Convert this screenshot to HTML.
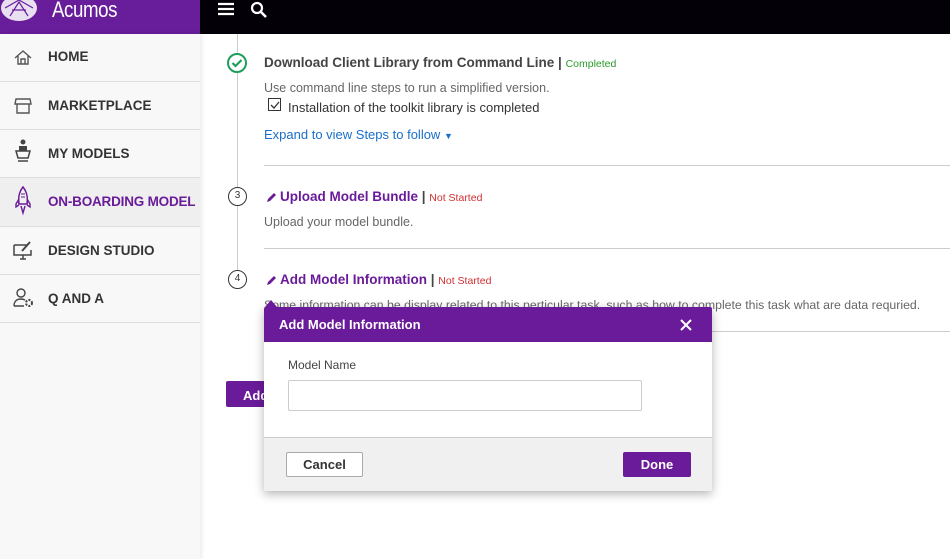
<!DOCTYPE html>
<html><head><meta charset="utf-8"><style>
*{box-sizing:border-box;margin:0;padding:0}
body{width:950px;height:559px;overflow:hidden;font-family:"Liberation Sans",Arial,sans-serif;background:#fff;position:relative}
.abs{position:absolute}
.hdrL{left:0;top:0;width:200px;height:34px;background:#681d9b}
.hdrR{left:200px;top:0;width:750px;height:34px;background:#030008}
.side{left:0;top:34px;width:200px;height:525px;background:#f8f8f8;box-shadow:2px 0 4px rgba(0,0,0,.08)}
.item{position:absolute;left:0;width:200px;height:48px;border-bottom:1px solid #ddd;font-weight:bold;font-size:13.5px;color:#333;white-space:nowrap}
.item span{position:absolute;left:48px;top:16px}
.item svg{position:absolute;left:12px;top:12px}
.t{font-size:13px;color:#444}
.g{color:#666;font-size:12px}
.line{left:237px;top:34px;width:1px;height:255px;background:#ccc}
.circ{width:19px;height:19px;border:1.5px solid #333;border-radius:50%;background:#fff;font-size:10px;text-align:center;line-height:16px;color:#333}
.hr{left:264px;width:686px;height:1px;background:#ccc}
.purple{color:#6a1b9a}
</style></head><body>
<div class="abs hdrL"></div>
<svg class="abs" style="left:0;top:0" width="40" height="24"><ellipse cx="19" cy="8" rx="18" ry="13" fill="#e8dff0"/><path d="M5 8 L19 0 L33 8 M10 16 L19 2 L28 16 M12 10 L26 10" stroke="#681d9b" stroke-width="1.2" fill="none"/></svg>
<div class="abs" style="left:52px;top:-3px;color:#fff;font-size:22px;letter-spacing:-0.5px;transform:scaleX(.85);transform-origin:left">Acumos</div>
<div class="abs hdrR"></div>
<svg class="abs" style="left:217px;top:2px" width="18" height="14"><path d="M1 2h16M1 7h16M1 12h16" stroke="#fff" stroke-width="2.2"/></svg>
<svg class="abs" style="left:250px;top:1px" width="18" height="18"><circle cx="7" cy="7" r="5" stroke="#fff" stroke-width="2.2" fill="none"/><path d="M11 11l5 5" stroke="#fff" stroke-width="2.6"/></svg>
<div class="abs side"></div>
<div class="item" style="top:34px"><svg width="22" height="22"><path d="M3 12L11 5l8 7M6 10v8h10v-8M9 18v-5h4v5" stroke="#555" stroke-width="1.4" fill="none"/></svg><span style="top:15px">HOME</span></div>
<div class="item" style="top:82px"><svg width="22" height="22"><path d="M4 5h14l1 5H3zM5 10v9h12v-9" stroke="#555" stroke-width="1.4" fill="none"/></svg><span>MARKETPLACE</span></div>
<div class="item" style="top:130px"><svg width="22" height="26" style="top:8px"><circle cx="11" cy="4" r="2.5" fill="#444"/><path d="M7 8h8v5H7z" fill="#444"/><path d="M4 13h14l-2 7H6z M6 23h10" stroke="#444" stroke-width="1.5" fill="none"/></svg><span>MY MODELS</span></div>
<div class="item" style="top:178px;background:#efefef;height:49px"><svg width="22" height="30" style="top:8px"><path d="M11 1c4 5 5 10 4 17H7C6 11 7 6 11 1z" stroke="#6a1b9a" stroke-width="1.6" fill="none"/><path d="M7 13l-3 5v3l3-2M15 13l3 5v3l-3-2M9 20l2 7 2-7" stroke="#6a1b9a" stroke-width="1.4" fill="none"/><path d="M9 8h4M9 11h4" stroke="#6a1b9a"/></svg><span class="purple" style="letter-spacing:-0.2px">ON-BOARDING MODEL</span></div>
<div class="item" style="top:227px"><svg width="22" height="22"><path d="M2 6h14M2 6v10h17v-5M8 20h6M11 16v4" stroke="#444" stroke-width="1.5" fill="none"/><path d="M18 3l-8 9" stroke="#444" stroke-width="2"/></svg><span>DESIGN STUDIO</span></div>
<div class="item" style="top:275px"><svg width="24" height="22"><circle cx="9" cy="6" r="4" stroke="#444" stroke-width="1.4" fill="none"/><path d="M2 19c0-5 3-7 7-7 2 0 3 .5 4 1M2 19h10" stroke="#444" stroke-width="1.4" fill="none"/><circle cx="17" cy="16" r="3" stroke="#444" stroke-width="2" fill="none" stroke-dasharray="2 1.3"/></svg><span>Q AND A</span></div>

<div class="abs line"></div>
<svg class="abs" style="left:226px;top:52px" width="22" height="22"><circle cx="11" cy="11" r="9" fill="#fff" stroke="#1e9e5a" stroke-width="2"/><path d="M6.5 11l3 3 6-6" stroke="#1e9e5a" stroke-width="2.2" fill="none"/></svg>
<div class="abs t" style="left:264px;top:55px;font-weight:bold;font-size:13.5px;color:#444">Download Client Library from Command Line | <span style="font-weight:normal;font-size:10.5px;color:#2a9a2a">Completed</span></div>
<div class="abs g" style="left:264px;top:81px;font-size:12.5px">Use command line steps to run a simplified version.</div>
<div class="abs" style="left:268px;top:98px;width:13px;height:13px;border:1px solid #333"></div>
<svg class="abs" style="left:269px;top:99px" width="12" height="12"><path d="M2 6l3 3 5-6" stroke="#333" stroke-width="1.3" fill="none"/></svg>
<div class="abs t" style="left:288px;top:100px;color:#333">Installation of the toolkit library is completed</div>
<div class="abs" style="left:264px;top:127px;font-size:13px;color:#1a6fc9">Expand to view Steps to follow <span style="font-size:9px">&#9660;</span></div>
<div class="abs hr" style="top:165px"></div>
<div class="abs circ" style="left:228px;top:187px">3</div>
<svg class="abs" style="left:266px;top:192px" width="11" height="11"><path d="M1 10l1-3 6-6 2 2-6 6z" fill="#6a1b9a"/></svg>
<div class="abs purple" style="left:280px;top:189px;font-weight:bold;font-size:13.5px">Upload Model Bundle <span style="color:#444">|</span> <span style="font-weight:normal;font-size:10.5px;color:#d03030">Not Started</span></div>
<div class="abs g" style="left:264px;top:215px;font-size:12.5px">Upload your model bundle.</div>
<div class="abs hr" style="top:248px"></div>
<div class="abs circ" style="left:228px;top:270px">4</div>
<svg class="abs" style="left:266px;top:275px" width="11" height="11"><path d="M1 10l1-3 6-6 2 2-6 6z" fill="#6a1b9a"/></svg>
<div class="abs purple" style="left:280px;top:272px;font-weight:bold;font-size:13.5px">Add Model Information <span style="color:#444">|</span> <span style="font-weight:normal;font-size:10.5px;color:#d03030">Not Started</span></div>
<div class="abs g" style="left:264px;top:298px;font-size:12.3px">Some information can be display related to this perticular task, such as how to complete this task what are data requried.</div>
<div class="abs hr" style="top:331px"></div>
<div class="abs" style="left:226px;top:381px;width:50px;height:26px;background:#6a1b9a;color:#fff;font-weight:bold;font-size:13px;padding:7px 0 0 17px;border-radius:2px">Add</div>

<div class="abs" style="left:264px;top:307px;width:448px;height:184px;background:#fff;box-shadow:0 3px 10px rgba(0,0,0,.3);border-radius:2px;overflow:hidden">
<div style="height:35px;background:#6a1b9a;color:#fff;font-weight:bold;font-size:13px;padding:10px 15px">Add Model Information</div>
<svg class="abs" style="left:416px;top:12px" width="12" height="12"><path d="M1 1l10 10M11 1L1 11" stroke="#fff" stroke-width="2"/></svg>
<div class="abs" style="left:24px;top:51px;font-size:12px;color:#444">Model Name</div>
<div class="abs" style="left:24px;top:73px;width:354px;height:31px;border:1px solid #ccc;border-radius:2px"></div>
<div class="abs" style="left:0;top:130px;width:448px;height:54px;background:#f0f0f0;border-top:1px solid #ccc"></div>
<div class="abs" style="left:22px;top:145px;width:77px;height:25px;background:#fff;border:1px solid #aaa;border-radius:2px;font-weight:bold;font-size:13px;color:#333;text-align:center;line-height:23px">Cancel</div>
<div class="abs" style="left:359px;top:145px;width:68px;height:25px;background:#6a1b9a;border-radius:2px;font-weight:bold;font-size:13px;color:#fff;text-align:center;line-height:25px">Done</div>
</div>
<div class="abs" style="left:265px;top:300px;width:0;height:0;border-left:6px solid transparent;border-right:6px solid transparent;border-bottom:7px solid #6a1b9a"></div>
</body></html>
